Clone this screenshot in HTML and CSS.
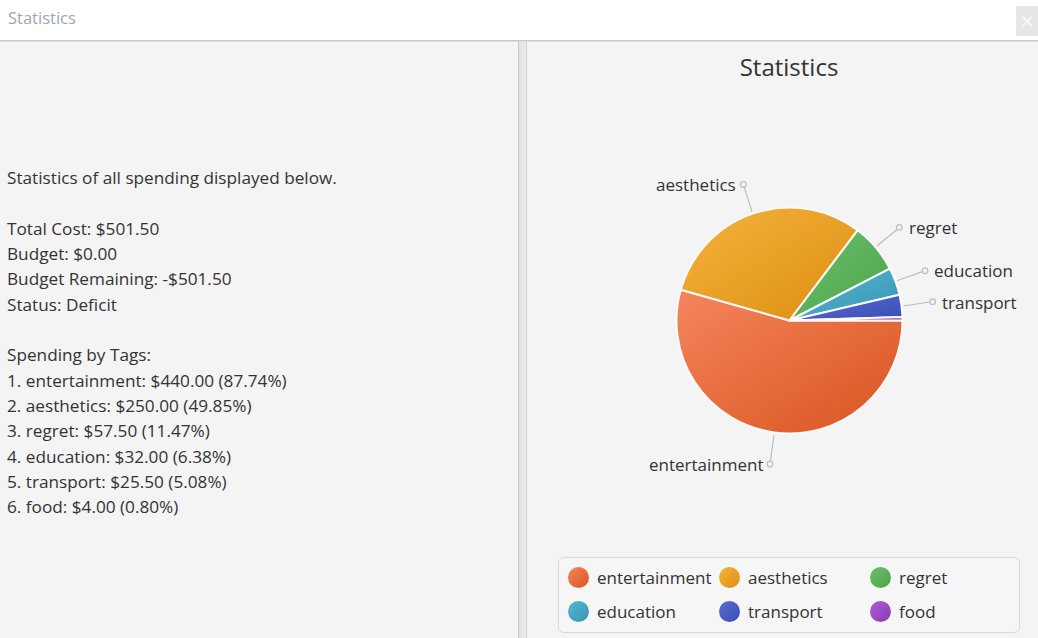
FILE: index.html
```html
<!DOCTYPE html>
<html>
<head>
<meta charset="utf-8">
<title>Statistics</title>
<link rel="stylesheet" href="styles.css">
</head>
<body>
<div class="window">
  <header class="titlebar">
    <span class="title">Statistics</span>
    <button class="close">×</button>
  </header>
  <main class="split">
    <section class="left-pane">
      <div class="stats-text">
        <div>Statistics of all spending displayed below.</div>
        <div class="blank">&nbsp;</div>
        <div>Total Cost: $501.50</div>
        <div>Budget: $0.00</div>
        <div>Budget Remaining: -$501.50</div>
        <div>Status: Deficit</div>
        <div class="blank">&nbsp;</div>
        <div>Spending by Tags:</div>
        <div>1. entertainment: $440.00 (87.74%)</div>
        <div>2. aesthetics: $250.00 (49.85%)</div>
        <div>3. regret: $57.50 (11.47%)</div>
        <div>4. education: $32.00 (6.38%)</div>
        <div>5. transport: $25.50 (5.08%)</div>
        <div>6. food: $4.00 (0.80%)</div>
      </div>
    </section>
    <div class="divider"></div>
    <section class="right-pane">
      <h1 class="chart-title">Statistics</h1>
      <svg class="pie" width="498" height="462" viewBox="540 83 498 462" xmlns="http://www.w3.org/2000/svg">
        <defs>
          <linearGradient id="g0" x1="0" y1="0" x2="1" y2="1"><stop offset="0" stop-color="#f5855d"/><stop offset="1" stop-color="#d9541f"/></linearGradient>
          <linearGradient id="g1" x1="0" y1="0" x2="1" y2="1"><stop offset="0" stop-color="#f6b23c"/><stop offset="1" stop-color="#dc8f12"/></linearGradient>
          <linearGradient id="g2" x1="0" y1="0" x2="1" y2="1"><stop offset="0" stop-color="#6cc16c"/><stop offset="1" stop-color="#4aa34a"/></linearGradient>
          <linearGradient id="g3" x1="0" y1="0" x2="1" y2="1"><stop offset="0" stop-color="#58b7d3"/><stop offset="1" stop-color="#3595b3"/></linearGradient>
          <linearGradient id="g4" x1="0" y1="0" x2="1" y2="1"><stop offset="0" stop-color="#5b6dd4"/><stop offset="1" stop-color="#3a4db5"/></linearGradient>
          <linearGradient id="g5" x1="0" y1="0" x2="1" y2="1"><stop offset="0" stop-color="#ad5fd6"/><stop offset="1" stop-color="#8a38b3"/></linearGradient>
        </defs>
        <g class="slices">
          <path fill="url(#g0)" d="M789.5 320.5 L902.5 320.5 A113 113 0 1 1 680.77 289.74 Z"/>
          <path fill="url(#g1)" d="M789.5 320.5 L680.77 289.74 A113 113 0 0 1 857.59 230.32 Z"/>
          <path fill="url(#g2)" d="M789.5 320.5 L857.59 230.32 A113 113 0 0 1 889.85 268.55 Z"/>
          <path fill="url(#g3)" d="M789.5 320.5 L889.85 268.55 A113 113 0 0 1 899.55 294.84 Z"/>
          <path fill="url(#g4)" d="M789.5 320.5 L899.55 294.84 A113 113 0 0 1 902.45 316.99 Z"/>
          <path fill="url(#g5)" d="M789.5 320.5 L902.45 316.99 A113 113 0 0 1 902.5 320.5 Z"/>
        </g>
        <g class="leaders">
          <line x1="752" y1="212" x2="744.2" y2="186.9"/>
          <circle cx="743.3" cy="184.4" r="2.8"/>
          <line x1="877" y1="246" x2="897.3" y2="229.2"/>
          <circle cx="899.3" cy="227.4" r="2.8"/>
          <line x1="897" y1="280.7" x2="922.4" y2="271.6"/>
          <circle cx="925" cy="270.7" r="2.8"/>
          <line x1="903.3" y1="306" x2="929.9" y2="302"/>
          <circle cx="932.7" cy="301.7" r="2.8"/>
          <line x1="774" y1="435" x2="770.4" y2="461.3"/>
          <circle cx="770" cy="464" r="2.8"/>
        </g>
        <g class="labels">
          <text x="656" y="191">aesthetics</text>
          <text x="909" y="233.5">regret</text>
          <text x="934" y="276.7">education</text>
          <text x="942" y="309">transport</text>
          <text x="649" y="470.7">entertainment</text>
        </g>
      </svg>
      <div class="legend">
        <div class="legend-item"><span class="swatch c0"></span>entertainment</div>
        <div class="legend-item"><span class="swatch c1"></span>aesthetics</div>
        <div class="legend-item"><span class="swatch c2"></span>regret</div>
        <div class="legend-item"><span class="swatch c3"></span>education</div>
        <div class="legend-item"><span class="swatch c4"></span>transport</div>
        <div class="legend-item"><span class="swatch c5"></span>food</div>
      </div>
    </section>
  </main>
</div>
</body>
</html>
```

FILE: styles.css
```css
html, body {
  margin: 0;
  padding: 0;
}

body {
  width: 1038px;
  height: 638px;
  overflow: hidden;
  background: #f4f4f4;
  color: #333333;
  font-family: "Open Sans", "Noto Sans", sans-serif;
}

.window {
  display: flex;
  flex-direction: column;
  height: 638px;
}

.titlebar {
  height: 40px;
  flex: none;
  background: #ffffff;
  border-bottom: 1px solid #c6c6c6;
  box-shadow: 0 1px 0 #dedede;
  display: flex;
  align-items: flex-start;
  justify-content: space-between;
  position: relative;
  z-index: 1;
}

.title {
  margin: 6px 0 0 8px;
  font-size: 16.5px;
  line-height: 24px;
  color: #9ea6b0;
}

.close {
  margin-top: 6px;
  width: 22px;
  height: 30px;
  padding: 0;
  border: 0;
  background: #e6e6e6;
  color: #f6f6f6;
  font-family: "DejaVu Sans", sans-serif;
  font-size: 17px;
  font-weight: bold;
  line-height: 30px;
}

.split {
  flex: 1;
  display: flex;
  min-height: 0;
}

.left-pane {
  width: 518px;
  flex: none;
  box-sizing: border-box;
  padding: 124px 0 0 7px;
  font-size: 17.2px;
  line-height: 25.33px;
  color: #333333;
}

.divider {
  width: 9px;
  flex: none;
  box-sizing: border-box;
  border-left: 1px solid #c8c8c8;
  border-right: 1px solid #d2d2d2;
  background: linear-gradient(to right, #e1e1e1, #ebebeb);
}

.right-pane {
  flex: 1;
  display: flex;
  flex-direction: column;
  padding: 9px 0 0 13px;
}

.chart-title {
  margin: 0;
  width: 498px;
  font-size: 24px;
  font-weight: normal;
  line-height: 33px;
  text-align: center;
  color: #333333;
}

.pie {
  display: block;
  flex: none;
}

.slices path {
  stroke: #fafafa;
  stroke-width: 2;
  stroke-linejoin: round;
}

.leaders line {
  stroke: #bdbdbd;
  stroke-width: 1.2;
}

.leaders circle {
  fill: none;
  stroke: #bdbdbd;
  stroke-width: 1.2;
}

.labels text {
  font-family: "Open Sans", "Noto Sans", sans-serif;
  font-size: 17px;
  fill: #333333;
}

.legend {
  margin: 12px 0 0 18px;
  width: 462px;
  height: 76px;
  box-sizing: border-box;
  border: 1px solid #d9d9d9;
  border-radius: 6px;
  background: #f6f6f6;
  padding: 2px 0 0 9px;
  display: grid;
  grid-template-columns: repeat(3, 151px);
  grid-auto-rows: 34px;
}

.legend-item {
  display: flex;
  align-items: center;
  gap: 8px;
  font-size: 17px;
  color: #333333;
}

.swatch {
  width: 21px;
  height: 21px;
  border-radius: 50%;
  flex: none;
}

.c0 { background: linear-gradient(to bottom right, #f5855d, #d9541f); }
.c1 { background: linear-gradient(to bottom right, #f6b23c, #dc8f12); }
.c2 { background: linear-gradient(to bottom right, #6cc16c, #4aa34a); }
.c3 { background: linear-gradient(to bottom right, #58b7d3, #3595b3); }
.c4 { background: linear-gradient(to bottom right, #5b6dd4, #3a4db5); }
.c5 { background: linear-gradient(to bottom right, #ad5fd6, #8a38b3); }
```
